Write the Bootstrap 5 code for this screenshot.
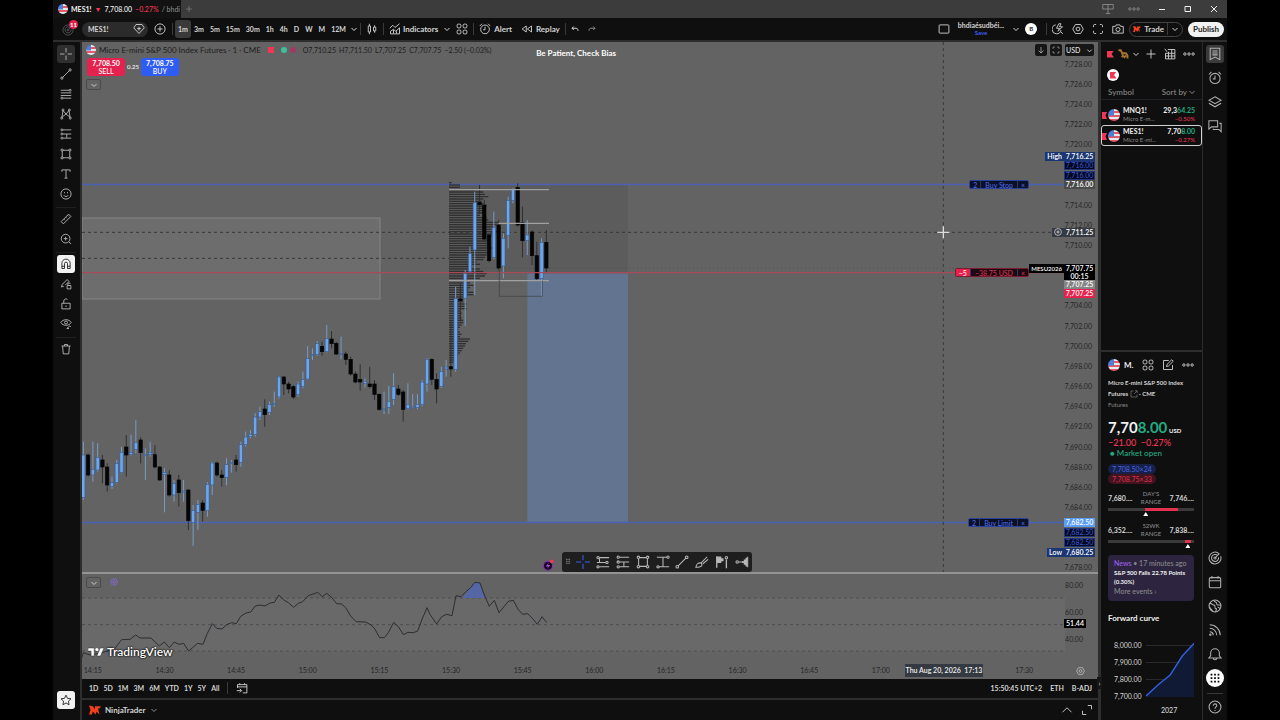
<!DOCTYPE html>
<html lang="en">
<head>
<meta charset="utf-8">
<meta name="viewport" content="width=device-width, initial-scale=1">
<title>MES1! chart</title>
<link href="https://cdn.jsdelivr.net/npm/bootstrap@5.3.0/dist/css/bootstrap.min.css" rel="stylesheet">
<style>
:root{--ink:#0f0f0f;--rule:#2e2e2e;--txt:#d4d4d4;--muted:#8a8a8a;--red:#f23655;--green:#22ab82;--blue:#3a5bf0;--pane:#636363}
body{background:#000;color:var(--txt);font:500 8px/12px Lato,"Liberation Sans",sans-serif}
button,select,input{font:inherit;color:inherit}
button{background:none;border:0;padding:0;white-space:nowrap}
h1,h2,h3,p{font:inherit;margin:0}
a{color:inherit;text-decoration:none}
.app{height:100vh;margin:0 53px;background:var(--ink)}
svg.ic{width:12px;height:12px;fill:none;stroke:currentColor;stroke-width:1.2;flex:none;display:block}
svg.ic.sm{width:8px;height:8px}
.tabs{height:18px;background:#3c3c3c}
.tab{width:128px;background:#121212;white-space:nowrap;padding-left:5px;gap:3px;font-size:7px}
.flag{width:10px;height:10px;border-radius:50%;flex:none;background:linear-gradient(#4d7fd6,#4d7fd6) 0 0/50% 55% no-repeat,repeating-linear-gradient(#e8e8f0 0 2px,#e35a68 2px 4px)}
.flag.lg{width:12px;height:12px}
.topbar{height:24px;border-bottom:2px solid var(--rule);font-weight:700;font-size:7px}
.symbol{width:66px;height:15px;border-radius:8px;background:#2b2b2b;padding:0 3px 0 6px}
.avatar{width:29px;height:20px}
.vr-line{width:1px;height:12px;background:#3a3a3a;flex:none}
.tight{gap:5px}
.iv button{height:18px;padding:0 3px;border-radius:3px}
.iv button:last-child{padding:0 2px 0 1px}
.iv button.on{background:#3a3a3a}
.pill{height:15px;border:1px solid #444;border-radius:8px;gap:3px;padding:0 3px}
.publish{height:15px;border-radius:8px;background:#f2f2f2;color:#222;width:36px;font-size:8px}
.t8{font-size:8px}
.blue{color:var(--blue)}.red{color:var(--red)}.green{color:var(--green)}.dim{color:var(--muted)}
.wh{color:#f0f0f0}
.tools{width:29px;border-right:2px solid var(--rule);padding:3px 1px 0 0;color:#b8b8b8}
.tools button{width:18px;height:18px;margin-bottom:2px;border-radius:3px;display:grid;place-items:center;flex:none}
.tools button.on{background:#2f2f2f}
.tools button.lit{background:#f2f2f2;color:#222}
.tools hr{width:20px;margin:2px 0;border-color:#555;flex:none}
.pane{background:var(--pane);color:#1c1c1c;min-height:0;overflow:hidden}
.pane svg.plot{position:absolute;inset:0;width:100%;height:100%}
.legend{position:absolute;left:4px;top:2px;gap:3px;white-space:nowrap;font-weight:400;font-size:7px}
.legend h1{font-size:8px;color:#1c1c1c}
.dot{width:6px;height:6px}
.quote{position:absolute;left:5px;top:16px;gap:2px}
.quote button{width:38px;height:18px;border-radius:3px;color:#fff;line-height:8px;font-size:7px}
.sell{background:#e5214d !important}.buy{background:#2f5cf5 !important}
.fold{width:15px;height:11px;border:1px solid #4a4a4a !important;border-radius:2px;display:grid !important;place-items:center;color:#ccc}
.note{position:absolute;left:46.2%;top:5px;color:#fff;font-weight:700;white-space:nowrap}
.axis{width:33px;flex:none;color:#262626;position:relative;font-size:7px;font-weight:400}
.ticks{padding-top:12px;position:absolute;inset:0 0 -6px}
.ticks span{flex:1 1 0;display:flex;align-items:center;justify-content:flex-end;padding-right:6px;line-height:9px}
.tag{position:absolute;right:3px;width:31px;height:9px;line-height:9px;margin-top:-4px;text-align:center;color:#fff;font-weight:600;font-size:7px;white-space:nowrap}
.tag.navy{background:#1c3672}.tag.deep{background:#04081f;box-shadow:inset 0 0 0 1px #22367c;color:#3a5ad8;font-weight:400}
.tag.gray{background:#4b4b4b}.tag.cross{background:#353a42}.tag.black{background:#000}.tag.two{height:16px;line-height:8px}
.tag.lite{background:#858585}.tag.hot{background:#e5214d}.tag.sky{background:#5b9cf6}
.side{position:absolute;right:1px;height:9px;line-height:9px;margin-top:-4px;padding:0 2px;color:#fff;font-weight:600;font-size:7px;z-index:2}
.order{position:absolute;right:36px;height:9px;line-height:8px;margin-top:-5px;font-size:7px;font-weight:400;background:#0b1026;border:1px solid #2b429a;border-radius:2px;color:#4f6ff0;white-space:nowrap}
.order span{padding:0 3px;border-right:1px solid #26386f}
.order span:nth-child(2){padding:0 4px}
.order button{padding:0 3px}
.order.short{background:#1c0a10;border-color:#7a1b30;color:#e0345a}
.order.short span:first-child{background:#e5214d;color:#fff}
.head-ctl{position:absolute;top:2px;right:4px;gap:3px;z-index:3}
.head-ctl button,.head-ctl select{height:12px;background:#161616;color:#ddd;border:0;border-radius:2px}
.head-ctl button{width:12px;display:grid;place-items:center}
.head-ctl select{width:29px;font-size:7px;font-weight:600;padding:0 1px;appearance:none}
.head-ctl .car{position:absolute;right:1px;top:3px;width:7px;height:7px;color:#ddd}
.float{position:absolute;left:48.8%;bottom:0;width:190px;height:20px;background:#1e1e1e;border-radius:3px;color:#b8b8b8;padding:0 3px;z-index:2}
.float svg.ic{width:14px;height:14px}
.spark{position:absolute;left:46.8%;bottom:1px;width:12px;height:12px;z-index:2}
.split{height:2px;background:#939393;flex:none}
.rsi{height:87px;flex:none}
.rsi .ticks{padding:0;inset:-2px 0 auto;}
.rsi .ticks span{flex:none;height:27px;padding-right:15px}
.times{height:18px;flex:none;background:var(--pane);color:#262626;font-size:7px;font-weight:400;overflow:hidden;position:relative;display:flex}
.times ol{margin:0 38px 0 -25px;padding:0;list-style:none;display:flex;flex:1}
.times li{flex:1 1 0;text-align:center;line-height:18px}
.stamp{position:absolute;left:81%;top:3px;width:78px;height:13px;line-height:13px;background:#353a42;color:#eee;font-weight:600;text-align:center;white-space:pre}
.brand{position:absolute;left:6px;bottom:2px;color:#fff;font:600 12px/14px Lato,sans-serif;gap:3px;text-shadow:0 0 2px #000,0 0 2px #000}
.ranges{height:21px;border-bottom:2px solid var(--rule);padding:0 6px 2px 7px;flex:none;font-size:7px}
.broker{height:20px;padding:0 5px 0 7px;flex:none}
.panel{width:105px;border-left:3px solid var(--rule);border-right:1px solid #2a2a2a;flex:none;position:relative}
.wl-row{height:21px;padding:0 6px;line-height:8px;border:1px solid transparent;position:relative;white-space:nowrap;font-size:7px;gap:3px}
.wl-row.sel{border-color:#d0d0d0;border-radius:3px}
.wl-row::before{content:"";position:absolute;left:0;top:7px;width:5px;height:7px;background:#f23655;clip-path:polygon(0 0,100% 0,70% 50%,100% 100%,0 100%)}
.wl-row small{font-size:6px;font-weight:400}
.ribbon{width:7px;height:7px;flex:none;background:#f23655;clip-path:polygon(0 0,100% 0,65% 50%,100% 100%,0 100%)}
.badge-r{width:12px;height:12px;border-radius:50%;background:#fff;display:grid;place-items:center}
.detail{border-top:2px solid var(--rule);padding:0 8px 0 7px}
.desc{font-size:6px;line-height:11px;font-weight:700;white-space:nowrap}
.big{font-size:15px;line-height:12px;font-weight:700;margin-top:11px;white-space:nowrap}
.chip{height:10px;line-height:10px;border-radius:5px;padding:0 4px;font-size:7px;width:max-content;font-weight:400}
.rangebar{height:3px;background:#3a3a3a;position:relative}
.rangebar i{position:absolute;top:0;bottom:0;background:#e5304f}
.rangebar b{position:absolute;top:4px;width:5px;height:4px;background:#fff;clip-path:polygon(50% 0,100% 100%,0 100%)}
.rng{font-size:7px;line-height:8px;height:17px}
.rng .dim{font-size:6px}
.news{background:#2d2540;border-radius:4px;padding:4px 6px;height:46px;line-height:9px;font-size:7px;white-space:nowrap}
.fc span{font-size:7px;line-height:17px;font-weight:400}
.rail{width:24px;padding-top:3px;color:#b0b0b0;flex:none}
.rail button{width:18px;height:18px;border-radius:3px;display:grid;place-items:center;margin-bottom:6px;flex:none}
.rail svg.ic{width:14px;height:14px}
.rail .on{background:#3a3a3a}
.rail .apps{background:#fff;color:#000;border-radius:50%}
.handle{position:absolute;left:-4px;bottom:31px;width:5px;height:12px;background:#161616;font-size:7px;color:#ccc;line-height:11px}
</style>
</head>
<body>
<svg class="d-none" xmlns="http://www.w3.org/2000/svg">
<symbol id="cross" viewBox="0 0 16 16"><path d="M8 0v6M8 10v6M0 8h6M10 8h6"/></symbol>
<symbol id="line" viewBox="0 0 16 16"><path d="M3.6 12.4l8.8-8.8"/><circle cx="2.6" cy="13.4" r="1.5"/><circle cx="13.4" cy="2.6" r="1.5"/></symbol>
<symbol id="fib" viewBox="0 0 16 16"><path d="M1 3h11M1 6.5h14M1 10h14M4 13.5h11"/><circle cx="13.5" cy="3" r="1.3"/><circle cx="2.5" cy="13.5" r="1.3"/></symbol>
<symbol id="pattern" viewBox="0 0 16 16"><path d="M2.5 13L4 3.500l4 4.500 4-4.500 1.500 9.500M3 12l5-4 5 4"/><circle cx="4" cy="2.700" r="1.300"/><circle cx="12.500" cy="2.700" r="1.300"/><circle cx="2.300" cy="13.500" r="1.300"/><circle cx="13.700" cy="13.500" r="1.300"/></symbol>
<symbol id="pos" viewBox="0 0 16 16"><path d="M4 2.500h11M4 8h11M4 13.500h11M9 8v5"/><circle cx="2.500" cy="2.500" r="1.300"/><circle cx="2.500" cy="8" r="1.300"/><circle cx="2.500" cy="13.500" r="1.300"/></symbol>
<symbol id="long" viewBox="0 0 16 16"><path d="M3.500 3H15M1 8.500h10M4 13.500h11M4 4v4"/><circle cx="2.300" cy="3" r="1.300"/><circle cx="12.500" cy="8.500" r="1.300"/><circle cx="2.300" cy="13.500" r="1.300"/></symbol>
<symbol id="rect" viewBox="0 0 16 16"><path d="M3 4v8M13 4v8M4 3h8M4 13h8"/><circle cx="2.700" cy="2.700" r="1.400"/><circle cx="13.300" cy="2.700" r="1.400"/><circle cx="2.700" cy="13.300" r="1.400"/><circle cx="13.300" cy="13.300" r="1.400"/></symbol>
<symbol id="text" viewBox="0 0 16 16"><path d="M2.500 5V2.500h11V5M8 2.500v11M6 13.500h4"/></symbol>
<symbol id="span" viewBox="0 0 16 16"><path d="M1 2.500h11.500M8 2.500v11M3.500 13.500H15"/><circle cx="13.700" cy="2.500" r="1.300"/><circle cx="2.300" cy="13.500" r="1.300"/></symbol>
<symbol id="smile" viewBox="0 0 16 16"><circle cx="8" cy="8" r="6.800"/><path d="M5 9.500c1 2.500 5 2.500 6 0M6 5.500v1.500M10 5.500v1.500"/></symbol>
<symbol id="ruler" viewBox="0 0 16 16"><path d="M1.500 11.500l10-10 3 3-10 10zM5 8l1.500 1.500M7.500 5.500L9 7M10 3l1.500 1.500"/></symbol>
<symbol id="zoomin" viewBox="0 0 16 16"><circle cx="7.500" cy="7.500" r="5.800"/><path d="M11.700 11.700l3 3M7.500 5v5M5 7.500h5"/></symbol>
<symbol id="magnet" viewBox="0 0 16 16"><path d="M2.500 14V7a5.500 5.500 0 0 1 11 0v7h-3.500V7.500a2 2 0 0 0-4 0V14zM2.500 11H6M10 11h3.500"/></symbol>
<symbol id="penlock" viewBox="0 0 16 16"><path d="M2 12l1-3.500L9.500 2 12 4.500 7 9.500M2 12l3-1M9.500 10h5v4.500h-5zM10.500 10V8a1.500 1.500 0 0 1 3 0"/></symbol>
<symbol id="lock" viewBox="0 0 16 16"><path d="M2.500 7h11v7.500h-11zM5 7V4a3 3 0 0 1 5-2M8 10v2"/></symbol>
<symbol id="eye" viewBox="0 0 16 16"><path d="M1 6c3-5 11-5 14 0-3 5-11 5-14 0z"/><circle cx="8" cy="6" r="2"/><path d="M9 14l4-3.500 1.500 1.500M9 14h3"/></symbol>
<symbol id="trash" viewBox="0 0 16 16"><path d="M2 4h12M6 4V2h4v2M3.500 4l.8 10.500h7.400L12.500 4"/></symbol>
<symbol id="star" viewBox="0 0 16 16"><path d="M8 1.500l2 4.300 4.700.6-3.500 3.200.9 4.700L8 12l-4.100 2.300.9-4.700L1.300 6.400l4.700-.6z"/></symbol>
<symbol id="plus" viewBox="0 0 16 16"><path d="M8 2v12M2 8h12"/></symbol>
<symbol id="pluso" viewBox="0 0 16 16"><circle cx="8" cy="8" r="6.800"/><path d="M8 4.500v7M4.500 8h7"/></symbol>
<symbol id="gem" viewBox="0 0 16 16"><path d="M4 2h8l3 4.500L8 14 1 6.500z"/><path d="M8 5v5M5.500 7.500h5"/></symbol>
<symbol id="down" viewBox="0 0 16 16"><path d="M3 6l5 5 5-5" stroke-width="2"/></symbol>
<symbol id="up" viewBox="0 0 16 16"><path d="M2 11l6-6 6 6"/></symbol>
<symbol id="candles" viewBox="0 0 16 16"><path d="M3 4h3v8H3zM4.500 1v3M4.500 12v3M10 5.500h3v5h-3zM11.500 3v2.500M11.500 10.500V13"/></symbol>
<symbol id="indic" viewBox="0 0 16 16"><path d="M1 7l4-4 3 3 6-5M2 14.500V11l4-2.500 3 2.500 5-4.500v8zM6 9v5M10 11v3"/></symbol>
<symbol id="grid" viewBox="0 0 16 16"><rect x="1.500" y="1.500" width="5" height="5" rx="1.500"/><rect x="9.500" y="1.500" width="5" height="5" rx="1.500"/><rect x="1.500" y="9.500" width="5" height="5" rx="1.500"/><rect x="9.500" y="9.500" width="5" height="5" rx="1.500"/></symbol>
<symbol id="alarm" viewBox="0 0 16 16"><circle cx="8" cy="8.500" r="5.800"/><path d="M8 5v4H5.500M1 4l3-3M15 4l-3-3"/></symbol>
<symbol id="rewind" viewBox="0 0 16 16"><path d="M7 4v8L1.500 8zM14 4v8L8.500 8z"/></symbol>
<symbol id="undo" viewBox="0 0 16 16"><path d="M5.500 3L2 6.500 5.500 10M2 6.500h8c3 0 4 2 4 5" stroke-width="2"/></symbol>
<symbol id="redo" viewBox="0 0 16 16"><path d="M10.500 3L14 6.500 10.500 10M14 6.500H6c-3 0-4 2-4 5" stroke-width="2"/></symbol>
<symbol id="square" viewBox="0 0 16 16"><rect x="1.500" y="2.500" width="13" height="11" rx="1"/></symbol>
<symbol id="bolt" viewBox="0 0 16 16"><path d="M5 2.500a6 6 0 1 0 7 7M11.500 11.500l3 3M9 1L6 7h4l-2 4 6-6h-4l2-4z"/></symbol>
<symbol id="hex" viewBox="0 0 16 16"><path d="M4.500 2h7L15 8l-3.500 6h-7L1 8z"/><circle cx="8" cy="8" r="2.500"/></symbol>
<symbol id="full" viewBox="0 0 16 16"><path d="M2 5.500V3.500a1.500 1.500 0 0 1 1.500-1.500h2M10.500 2h2A1.500 1.500 0 0 1 14 3.500v2M14 10.500v2a1.500 1.500 0 0 1-1.500 1.500h-2M5.500 14h-2A1.500 1.500 0 0 1 2 12.500v-2"/></symbol>
<symbol id="cam" viewBox="0 0 16 16"><path d="M1 4.500h3.500l1-2h5l1 2H15v9H1z"/><circle cx="8" cy="8.700" r="2.700"/></symbol>
<symbol id="nt" viewBox="0 0 16 16"><path fill="#f0401c" stroke="none" d="M0 2l5 1 3 4V3h8l-2 3h-2l2 8-4-4-1 4-4-4-1 4H0l2-6z"/></symbol>
<symbol id="dots" viewBox="0 0 16 16"><circle cx="2.500" cy="8" r="1.600"/><circle cx="8" cy="8" r="1.600"/><circle cx="13.500" cy="8" r="1.600"/></symbol>
<symbol id="table" viewBox="0 0 16 16"><path d="M5 2h9.500v12.500H2V7M2 7h12.500M2 10.700h12.500M6 5v9.500M10.300 2v12.500M1 1l3 4"/></symbol>
<symbol id="list" viewBox="0 0 16 16"><path d="M2.500 1.500h11v13L8 11.500l-5.500 3zM5 4.500h6M5 6.800h6M5 9h6"/></symbol>
<symbol id="layers" viewBox="0 0 16 16"><path d="M8 2l7 4-7 4-7-4zM1 9.500l7 4 7-4"/></symbol>
<symbol id="chat" viewBox="0 0 16 16"><path d="M1 2h10v7H4l-3 2.500zM13 5h2v9.500L12.500 12H6v-1"/></symbol>
<symbol id="target" viewBox="0 0 16 16"><path d="M12.800 3.200A6.800 6.800 0 1 0 14.500 6M11 5.200a4 4 0 1 0 1 2M8 8l5-5"/><circle cx="8" cy="8" r="1.200"/></symbol>
<symbol id="cal" viewBox="0 0 16 16"><rect x="1.500" y="3" width="13" height="11.500" rx="1.500"/><path d="M1.500 6.500h13M4.500 1v3M11.500 1v3"/></symbol>
<symbol id="globe" viewBox="0 0 16 16"><circle cx="8" cy="8" r="6.800"/><path d="M2 5c3 0 3 2 5 2s0 4 2 4-1 3 0 4M7 1.500c0 3 3 1 3 4s4 0 4.500 2M11 9l3 2M1.500 9l4 5"/></symbol>
<symbol id="rss" viewBox="0 0 16 16"><path d="M2 2a12 12 0 0 1 12 12M2 6a8 8 0 0 1 8 8M2 10a4 4 0 0 1 4 4"/><circle cx="2.700" cy="13.300" r=".8"/></symbol>
<symbol id="bell" viewBox="0 0 16 16"><path d="M1 12.500h14l-2-2.500V7A5 5 0 0 0 3 7v3zM6 12.500a2 2 0 0 0 4 0"/></symbol>
<symbol id="nine" viewBox="0 0 16 16"><g fill="currentColor" stroke="none"><path d="M3 3h2v2H3zM7 3h2v2H7zM11 3h2v2h-2zM3 7h2v2H3zM7 7h2v2H7zM11 7h2v2h-2zM3 11h2v2H3zM7 11h2v2H7zM11 11h2v2h-2z"/></g></symbol>
<symbol id="help" viewBox="0 0 16 16"><circle cx="8" cy="8" r="6.800"/><path d="M6 6.500C6 3.500 10 4 10 6.300 10 8 8 8 8 10M8 11.300v1.200"/></symbol>
<symbol id="brush" viewBox="0 0 16 16"><path d="M1 14c1-4 2-5 5-5 1 0 2 1 2 2 0 3-4 3-7 3zM7 9l7-7M9 10l6-5"/></symbol>
<symbol id="vol" viewBox="0 0 16 16"><path d="M2 1.500v13M2 2.500h4.500v2H9v2H6.500v2H2M13 5v10" stroke-width="1.500"/><path fill="currentColor" stroke="none" d="M2 2.500h4.500v2H9v2H6.500v2H2z"/><circle cx="13" cy="3" r="1.400"/></symbol>
<symbol id="vol2" viewBox="0 0 16 16"><path d="M14.500 2v12M4 8h5"/><path fill="currentColor" stroke="none" d="M14 3h-2v2h-2v2H8v2h2v2h2v2h2z"/><circle cx="2.500" cy="8" r="1.400"/></symbol>
<symbol id="edit" viewBox="0 0 16 16"><path d="M9 2H2v12h12V8M6 10l.7-2.700L13 1l2 2-6.300 6.300z"/></symbol>
<symbol id="ext" viewBox="0 0 16 16"><path d="M7 2H2v12h12V9M10 1.500h4.500V6M14 2L8 8"/></symbol>
<symbol id="goto" viewBox="0 0 16 16"><path d="M2 8V3.500h12.500v11H9M2 6.500h12.500M5 1.500v2M11.500 1.500v2M1 11.500h6M5 9l2.500 2.500L5 14"/></symbol>
<symbol id="max" viewBox="0 0 16 16"><path d="M9 2h5v5M7 14H2V9"/></symbol>
</svg>

<div class="app d-flex flex-column">
  <div class="tabs d-flex align-items-stretch">
    <div class="tab d-flex align-items-center wh"><span class="flag"></span><b>MES1!</b><span class="red">▼</span><span>7,708.00</span><span class="red">−0.27%</span><span class="dim">/ bhdi</span></div>
    <button class="px-1 dim" aria-label="New tab"><svg class="ic sm"><use href="#plus"/></svg></button>
    <div class="ms-auto d-flex align-items-center" style="gap:14px;margin-right:9px">
      <svg class="ic dim" viewBox="0 0 16 16"><path d="M1 2h14v6H1zM8 2v12M5 14h6"/></svg><svg class="ic dim me-1"><use href="#dots"/></svg>
      <svg class="ic sm wh" viewBox="0 0 16 16"><path d="M2 9h12" stroke-width="2"/></svg>
      <svg class="ic sm wh mx-1" viewBox="0 0 16 16"><path d="M2 3h11v10H2z" stroke-width="2"/></svg>
      <svg class="ic sm wh" viewBox="0 0 16 16"><path d="M2 2l12 12M14 2L2 14" stroke-width="2"/></svg>
    </div>
  </div>

  <header class="topbar d-flex align-items-center">
    <div class="avatar position-relative"><svg class="ic position-absolute" style="left:9px;top:5px;color:#555"><use href="#target"/></svg><span class="position-absolute rounded-circle text-center text-white" style="left:16px;top:1px;width:9px;height:9px;line-height:9px;font-size:6px;background:#e5214d">11</span></div>
    <div class="d-flex align-items-center" style="gap:6px">
      <button class="symbol d-flex align-items-center justify-content-between"><span>MES1!</span><svg class="ic"><use href="#gem"/></svg></button>
      <button aria-label="Compare"><svg class="ic"><use href="#pluso"/></svg></button>
      <span class="vr-line"></span>
    </div>
    <div class="iv d-flex align-items-center" style="margin-left:2px"><button class="on">1m</button><button>3m</button><button>5m</button><button>15m</button><button>30m</button><button>1h</button><button>4h</button><button>D</button><button>W</button><button>M</button><button>12M</button><button aria-label="More"><svg class="ic sm"><use href="#down"/></svg></button></div>
    <div class="d-flex align-items-center tight">
      <span class="vr-line"></span>
      <button aria-label="Candles"><svg class="ic"><use href="#candles"/></svg></button>
      <span class="vr-line"></span>
      <button class="d-flex align-items-center t8" style="gap:2px"><svg class="ic"><use href="#indic"/></svg>Indicators</button>
      <svg class="ic sm"><use href="#down"/></svg>
      <button aria-label="Layouts"><svg class="ic"><use href="#grid"/></svg></button>
      <span class="vr-line"></span>
      <button class="d-flex align-items-center t8" style="gap:3px"><svg class="ic"><use href="#alarm"/></svg>Alert</button>
      <button class="d-flex align-items-center t8 ms-1" style="gap:3px"><svg class="ic"><use href="#rewind"/></svg>Replay</button>
      <span class="vr-line"></span>
      <button class="me-1" aria-label="Undo"><svg class="ic sm"><use href="#undo"/></svg></button>
      <button class="dim" aria-label="Redo"><svg class="ic sm"><use href="#redo"/></svg></button>
    </div>
    <div class="ms-auto d-flex align-items-center gap-2">
      <svg class="ic"><use href="#square"/></svg>
      <div class="text-center" style="line-height:7px"><div>bhdiaésudbéi...</div><div class="blue" style="font-size:6px">Save</div></div>
      <div class="d-flex align-items-center tight"><svg class="ic sm"><use href="#down"/></svg>
      <span class="rounded-circle bg-white text-dark text-center" style="width:12px;height:12px;font-size:6px">B</span>
      <span class="vr-line ms-1"></span>
      <svg class="ic"><use href="#bolt"/></svg></div><svg class="ic"><use href="#hex"/></svg><svg class="ic"><use href="#full"/></svg>
      <div class="d-flex align-items-center tight" style="margin-right:3px"><svg class="ic"><use href="#cam"/></svg><div class="pill d-flex align-items-center t8"><svg class="ic sm"><use href="#nt"/></svg><button>Trade</button><span class="vr-line"></span><svg class="ic sm"><use href="#down"/></svg></div>
      <button class="publish">Publish</button></div>
    </div>
  </header>

  <div class="d-flex flex-fill" style="min-height:0">
    <nav class="tools d-flex flex-column align-items-center" id="tools" aria-label="Drawing tools"></nav>

    <main class="d-flex flex-column flex-fill" style="min-width:0">
      <section class="pane d-flex flex-fill position-relative">
        <div class="flex-fill position-relative overflow-hidden">
          <svg class="plot" id="price" viewBox="0 0 2949 1590" preserveAspectRatio="none">
            <rect x="0" y="528" width="894" height="243" fill="#6d6d6d" stroke="#858585" stroke-width="3"/>
            <rect x="1101" y="430" width="537" height="264" fill="#5c5c5c"/>
            <rect x="1336" y="694" width="302" height="749" fill="#62748f"/>
            <path d="M0 427.500H2949M0 1441.500H2949" stroke="#4a62b4" stroke-width="4"/>
            <g stroke="#383838" stroke-width="3" stroke-dasharray="9 9"><path d="M0 571H2949M0 649H1101M2584 0V1590"/></g>
            <path d="M1101 679H2949" stroke="#505050" stroke-width="3" stroke-dasharray="3 9"/>
            <g id="profile" stroke="#303030" stroke-width="4"></g>
            <g id="candlesA" transform="translate(0 834)"></g>
            <g id="candlesB" transform="translate(0 384)"></g>
            <path d="M0 692H2949" stroke="#a84a5a" stroke-width="4"/>
            <path d="M1101 443H1401M1249 544H1401M1101 716H1401" stroke="#a0a0a0" stroke-width="4"/>
            <path d="M1252 678V763H1381V716" fill="none" stroke="#404040" stroke-width="2"/>
            <path d="M2584 553V589M2566 571H2602" stroke="#ddd" stroke-width="4"/>
          </svg>
          <div class="legend d-flex align-items-center"><span class="flag"></span><h1>Micro E-mini S&amp;P 500 Index Futures · 1 · CME</h1><span class="ms-1 dot" style="background:#f23655"></span><span class="rounded-circle ms-1 dot" style="background:#3fc09a"></span><span class="rounded-circle dot" style="background:#a03a62"></span><span class="ms-1">O7,710.25</span><span>H7,711.50</span><span>L7,707.25</span><span>C7,707.75</span><span>−2.50 (−0.03%)</span></div>
          <div class="quote d-flex align-items-center"><button class="sell"><b>7,708.50</b><br>SELL</button><span class="text-center text-light" style="font-size:6px">0.25</span><button class="buy"><b>7,708.75</b><br>BUY</button></div>
          <button class="fold position-absolute" style="left:4px;top:37px" aria-label="Collapse"><svg class="ic sm"><use href="#down"/></svg></button>
          <p class="note">Be Patient, Check Bias</p>
          <div class="order d-flex" style="top:27%"><span>2</span><span>Buy Stop</span><button>×</button></div>
          <div class="order short d-flex" style="top:43.600%"><span>−5</span><span>−38.75 USD</span><button>×</button></div>
          <div class="order d-flex" style="top:90.700%"><span>2</span><span>Buy Limit</span><button>×</button></div>
          <span class="side" style="top:21.500%;background:#1c3672">High</span>
          <span class="side" style="top:35.800%;background:#353a42"><svg class="ic sm"><use href="#pluso"/></svg></span>
          <span class="side" style="top:42.700%;background:#000;font-size:6px">MESU2026</span>
          <span class="side" style="top:96.200%;background:#1c3672">Low</span>
          <svg class="spark" viewBox="0 0 16 16"><circle cx="8" cy="9" r="6" fill="#16041f" stroke="#8e2fb8" stroke-width="1.500"/><path d="M9 5L5 10h3l-1 3 4-5H8z" fill="#b050e0"/><circle cx="13" cy="3" r="2.500" fill="#f23655"/></svg>
          <div class="float d-flex align-items-center justify-content-between" id="float"></div>
        </div>
        <div class="axis"><div class="ticks d-flex flex-column" id="ticks"></div><div id="tags"></div></div>
        <div class="head-ctl d-flex"><button aria-label="Scroll down"><svg class="ic sm" viewBox="0 0 16 16"><path d="M8 2v12M3 9l5 5 5-5"/></svg></button><button aria-label="Fit"><svg class="ic sm"><use href="#full"/></svg></button><select aria-label="Currency"><option>USD</option></select><svg class="ic car"><use href="#down"/></svg></div>
      </section>
      <div class="split"></div>
      <section class="pane rsi d-flex">
        <div class="flex-fill position-relative">
          <svg class="plot" viewBox="0 0 2949 261" preserveAspectRatio="none">
            <rect y="72" width="2949" height="159" fill="#696969"/>
            <path d="M0 72H2949M0 152H2949M0 231H2949" stroke="#4e4e4e" stroke-width="3" stroke-dasharray="9 9"/>
            <path d="M1140 72L1166 41 1179 25 1194 27 1207 63 1210 72z" fill="#5566a5"/>
            <polyline id="rsi" fill="none" stroke="#2d2d33" stroke-width="3"/>
          </svg>
          <button class="fold position-absolute" style="left:4px;top:3px" aria-label="Collapse"><svg class="ic sm"><use href="#down"/></svg></button>
          <svg class="ic sm position-absolute" style="left:28px;top:4px;color:#8468c8;stroke-width:2"><use href="#hex"/></svg>
          <div class="brand d-flex align-items-center"><svg width="16" height="10" viewBox="0 0 36 22"><path fill="#fff" stroke="#222" d="M14 20H7V9H0V2h14zM28 20h-8l7.500-18H36z"/><circle cx="20" cy="5.500" r="3.500" fill="#fff"/></svg>TradingView</div>
        </div>
        <div class="axis"><div class="ticks"><span>80.00</span><span>60.00</span><span>40.00</span></div><span class="tag black" style="top:56%;right:12px;width:22px">51.44</span></div>
      </section>
      <div class="times"><ol id="times"></ol><span class="stamp">Thu Aug 20, 2026  17:13</span><svg class="ic position-absolute" style="right:13px;top:4px;width:9px;color:#ccc"><use href="#hex"/></svg></div>
      <div class="ranges d-flex align-items-center gap-2 fw-bold"><div class="d-flex tight"><button>1D</button><button>5D</button><button>1M</button><button>3M</button><button>6M</button><button>YTD</button><button>1Y</button><button>5Y</button><button>All</button></div><span class="vr-line"></span><button aria-label="Go to date"><svg class="ic"><use href="#goto"/></svg></button><span class="ms-auto">15:50:45 UTC+2</span><button>ETH</button><button>B-ADJ</button></div>
      <div class="broker d-flex align-items-center gap-1"><svg class="ic"><use href="#nt"/></svg><b>NinjaTrader</b><svg class="ic sm dim"><use href="#down"/></svg><svg class="ic ms-auto me-1"><use href="#up"/></svg><svg class="ic"><use href="#max"/></svg></div>
    </main>

    <aside class="panel d-flex flex-column">
      <div class="d-flex align-items-center" style="height:24px;padding:0 7px 0 6px;gap:3px"><span class="ribbon"></span><svg class="ic" viewBox="0 0 16 16"><path d="M2 3h3l2 4h5l2 3v4M7 7l1 4-2 1M12 10l-3 3" stroke="#a8742e" stroke-width="2.500"/></svg><svg class="ic sm"><use href="#down"/></svg><button class="ms-auto"><svg class="ic"><use href="#plus"/></svg></button><button class="mx-1"><svg class="ic"><use href="#table"/></svg></button><button><svg class="ic"><use href="#dots"/></svg></button></div>
      <div style="padding:3px 6px 5px"><span class="badge-r"><span class="ribbon"></span></span></div>
      <div class="d-flex justify-content-between dim border-bottom border-dark" style="padding:0 6px 1px 7px"><span>Symbol</span><span class="d-flex align-items-center" style="gap:1px">Sort by<svg class="ic sm"><use href="#down"/></svg></span></div>
      <div class="wl-row d-flex align-items-center" style="margin-top:4px"><span class="flag lg"></span><span><b class="wh">MNQ1!</b><br><small class="dim">Micro E-m...</small></span><span class="ms-auto text-end"><b class="wh">29,3<span class="green">64.25</span></b><br><small class="red">−0.50%</small></span></div>
      <div class="wl-row sel d-flex align-items-center"><span class="flag lg"></span><span><b class="wh">MES1!</b><br><small class="dim">Micro E-mi...</small></span><span class="ms-auto text-end"><b class="wh">7,70<span class="green">8.00</span></b><br><small class="red">−0.27%</small></span></div>
      <div class="detail mt-auto">
        <div class="d-flex align-items-center" style="height:25px"><span class="flag lg me-1"></span><b class="wh">M.</b><svg class="ic ms-auto"><use href="#grid"/></svg><svg class="ic mx-2"><use href="#edit"/></svg><svg class="ic"><use href="#dots"/></svg></div>
        <div class="desc">Micro E-mini S&amp;P 500 Index<br>Futures <svg class="ic sm d-inline-block dim"><use href="#ext"/></svg> · CME<br><span class="dim fw-normal">Futures</span></div>
        <div class="big wh">7,70<span class="green">8.00</span> <span style="font-size:6px;margin-left:-2px">USD</span></div>
        <div class="red" style="font-size:9px;line-height:11px">−21.00&nbsp; −0.27%</div>
        <div class="green" style="line-height:11px;padding-left:2px">● Market open</div>
        <div class="chip" style="background:#16204a;color:#4c68e0;margin-top:5px">7,708.50×24</div>
        <div class="chip" style="background:#421420;color:#e0304f">7,708.75×33</div>
        <div class="rng d-flex justify-content-between align-items-center" style="margin-top:5px"><b>7,680....</b><span class="text-center dim">DAY'S<br>RANGE</span><b>7,746....</b></div>
        <div class="rangebar" style="margin-top:2px"><i style="left:43%;right:19%"></i><b style="left:41%"></b></div>
        <div class="rng d-flex justify-content-between align-items-center" style="margin-top:10px"><b>6,352....</b><span class="text-center dim">52WK<br>RANGE</span><b>7,838....</b></div>
        <div class="rangebar" style="margin-top:2px"><i style="left:90%;right:4%"></i><b style="left:90%"></b></div>
        <div class="news" style="margin-top:12px"><span style="color:#9a62ea">News</span> <span class="dim">• 17 minutes ago</span><br><span class="wh fw-bold" style="font-size:6px">S&amp;P 500 Falls 22.78 Points<br>(0.30%)</span><br><a class="dim" href="#" style="line-height:11px">More events ›</a></div>
        <h2 class="wh fw-bold" style="margin-top:11px">Forward curve</h2>
        <div class="fc d-flex" style="margin-top:13px;padding-left:6px"><div class="d-flex flex-column"><span>8,000.00</span><span>7,900.00</span><span>7,800.00</span><span>7,700.00</span></div>
          <svg class="flex-fill ms-1" height="68" viewBox="0 0 52 68" preserveAspectRatio="none" style="min-width:0;width:40px"><path d="M0 8.500h52M0 25.500h52M0 42.500h52M0 59.500h52" stroke="#2c2c2c"/><path d="M0 59L14 47 26 38 39 19 52 6V60H0z" fill="#101a34"/><path d="M0 59L14 47 26 38 39 19 52 6" fill="none" stroke="#3660e0" stroke-width="1.500"/></svg></div>
        <div style="font-size:7px;padding-left:53px;line-height:10px">2027</div><div style="height:5px"></div>
      </div>
      <button class="handle" aria-label="Collapse panel">›</button>
    </aside>
    <nav class="rail d-flex flex-column align-items-center" aria-label="Panels"><button class="on"><svg class="ic"><use href="#list"/></svg></button><button><svg class="ic"><use href="#alarm"/></svg></button><button><svg class="ic"><use href="#layers"/></svg></button><button><svg class="ic"><use href="#chat"/></svg></button><button class="mt-auto"><svg class="ic"><use href="#target"/></svg></button><button><svg class="ic"><use href="#cal"/></svg></button><button><svg class="ic"><use href="#globe"/></svg></button><button><svg class="ic"><use href="#rss"/></svg></button><button><svg class="ic"><use href="#bell"/></svg></button><button class="apps"><svg class="ic"><use href="#nine"/></svg></button><hr class="m-0" style="width:16px"><button class="mt-1 mb-1"><svg class="ic"><use href="#help"/></svg></button></nav>
  </div>
</div>

<script src="https://cdn.jsdelivr.net/npm/bootstrap@5.3.0/dist/js/bootstrap.bundle.min.js"></script>
<script>
const $=id=>document.getElementById(id), icon=n=>`<svg class="ic"><use href="#${n}"/></svg>`;
// drawing tools; "-" is a divider, a suffix gives the state
$('tools').innerHTML='cross:on line fib pattern pos rect text smile - ruler zoomin - magnet:lit penlock lock eye - trash star:lit'.split(' ').map(t=>{
  if(t==='-')return '<hr>';const [n,s='']=t.split(':');
  return `<button class="${s}${n==='star'?' mt-auto':''}" ${n==='star'?'data-last':''} aria-label="${n}">${icon(n)}</button>`}).join('');
document.querySelector('[data-last]').style.marginBottom='11px';
$('float').innerHTML='<span class="dim">⠿</span><button class="blue">'+icon('cross')+'</button>'+['long','pos','rect','span','line','brush','vol','vol2'].map(n=>`<button aria-label="${n}">${icon(n)}</button>`).join('');

// candles: u/d, high, body top, body bottom, low
const A=`u365,405,532,540 d400,405,465,470 u365,448,465,485 u370,412,450,455 d405,420,441,490 d430,441,495,515 u470,488,500,507 u420,430,487,490 u380,397,457,460 d345,381,405,470 u345,397,403,407 u300,367,388,400 d352,360,398,430 u385,404,405,480 u365,397,404,410 d375,404,441,445 d438,441,480,482 u445,457,464,577 d450,465,525,530 u480,490,525,545 d465,480,518,560 u480,513,516,545 d508,510,602,630 u555,571,608,678 u540,553,577,630 d540,549,571,605 u487,493,571,590 u425,429,495,525 d425,429,465,470 d450,465,473,500 u415,434,472,495 u420,427,428,458 d405,420,434,455 u365,374,428,440 u335,351,374,380 u330,343,350,355 u280,291,344,350 u260,275,291,300 d238,267,284,320 u245,253,277,285 u215,250,254,260 u168,171,231,236 d168,171,192,225 d185,192,207,220 d195,200,231,237 u185,192,224,230 u155,179,200,205 u78,116,177,180 u85,103,107,120 u63,70,103,108 d65,79,95,107 u15,55,95,97 d33,57,71,85 d65,70,102,105 u50,100,102,118 d95,102,118,135 d110,118,162,167 d155,162,186,190 d133,178,186,212 u175,184,191,203 d140,192,200,205 d180,192,223,240 d220,223,268,272 u215,267,268,282 u198,244,262,282 u160,200,238,255 d195,207,223,228 d210,216,268,305 u190,254,266,268 u222,261,262,265 u222,254,262,268 u180,186,253,258 u115,118,192,215 d115,118,178,195 d160,178,207,250 u140,154,200,204 u120,141,147,170 d0,140,147,170`.split(' ');
const B=`u350,385,598,605 d340,387,392,455 u300,310,385,468 u230,250,305,310 u65,97,240,375 d45,97,104,130 d90,105,207,215 d190,195,272,278 u125,172,262,268 d150,165,294,300 u190,205,288,325 u80,91,197,235 u55,58,91,100 d40,52,165,170 d110,158,212,262 u150,195,211,255 d180,186,257,285 d215,257,326,330 u205,217,326,380 d180,217,294,310`.split(' ');
function draw(list,start,el){el.innerHTML=list.map((c,i)=>{const up=c[0]==='u',[h,t,b,l]=c.slice(1).split(',').map(Number),x=4+14.320*(start+i);
  return `<path d="M${x} ${h}V${l}" stroke="${up?'#7a9cc8':'#303030'}" stroke-width="3"/><rect x="${x-5}" y="${t}" width="10" height="${Math.max(3,b-t)}" fill="${up?'#6ea6ec':'#050505'}" stroke="${up?'#3a5c90':'#050505'}" stroke-width="2"/>`}).join('')}
draw(A,0,$('candlesA'));draw(B,A.length,$('candlesB'));
// volume profile row ends, one row every 7 units
const V=[65,90,90,135,160,165,175,160,155,160,170,165,165,160,150,170,175,205,200,190,185,205,190,185,180,180,175,180,190,170,175,170,165,160,140,150,125,150,160,170,165,150,110,120,130,120,115,130,130,110,100,100,110,105,110,90,95,90,95,100,100,95,90,85,90,95,90,120,115,108,105,100,95,90,85,80,75,70];
$('profile').innerHTML=V.map((w,i)=>`<path d="M1101 ${422+i*7}H${1044+w}"/>`).join('');
// oscillator line
const R1='93,270 100,248 120,255 150,250 195,235 215,209 240,208 257,195 270,204 303,204 328,228 343,216 358,233 373,216 387,223 401,220 416,243 443,220 459,223 472,190 487,161 500,175 516,177 530,164 545,158 559,161 572,139 588,129 602,126 616,108 630,105 645,108 660,99 673,97 687,75 700,89 715,98 731,112 745,100 758,95 775,77 790,72 803,67 817,80 830,70 845,82 860,101 875,102 887,113 902,138 918,155 947,156 965,166 975,178 989,203 1003,203 1015,188 1031,157 1045,170 1060,194 1074,187 1090,188 1103,183 1116,148 1131,113';
const R2='0,208 20,237 35,215 50,208 66,212 78,152 93,155 108,140 122,128 135,112 150,114 163,150 178,184 193,166 207,203 222,185 235,169 250,166 265,194 278,208 293,206 308,221 322,238 336,215 350,233';
const shift=(s,dx,dy)=>s.split(' ').map(p=>{const [x,y]=p.split(',').map(Number);return `${x+dx},${y+dy}`}).join(' ');
$('rsi').setAttribute('points',shift(R1,-96,-12)+' '+shift(R2,1044,-87));
// scales
const covered=[7718,7716,7708,7706,7682,7680];
for(let p=7728;p>=7678;p-=2)$('ticks').innerHTML+=`<span>${covered.includes(p)?'':p.toLocaleString('en-US')+'.00'}</span>`;
$('tags').innerHTML=[['7,716.25',114,'navy'],['7,716.00',123,'deep'],['7,716.00',133,'deep'],['7,716.00',142,'gray'],['7,711.25',190,'cross'],['7,707.75<br>00:15',226,'black two'],['7,707.25',242,'lite'],['7,707.25',251,'hot'],['7,682.50',480,'sky'],['7,682.50',490,'deep'],['7,682.50',500,'deep'],['7,680.25',510,'navy']].map(([t,y,c])=>`<span class="tag ${c}" style="top:${(y/5.3).toFixed(1)}%">${t}</span>`).join('');
$('times').innerHTML='14:15 14:30 14:45 15:00 15:15 15:30 15:45 16:00 16:15 16:30 16:45 17:00 - 17:30'.split(' ').map(t=>`<li>${t==='-'?'':t}</li>`).join('');
</script>
</body>
</html>
